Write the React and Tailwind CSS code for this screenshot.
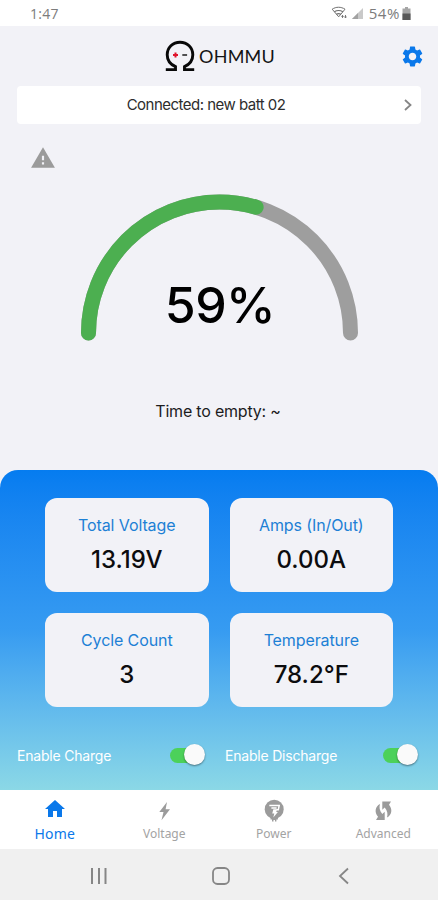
import React, { useState } from 'react';
import { MdSettings, MdWarning, MdHome } from 'react-icons/md';

const stats = [
  { label: 'Total Voltage', value: '13.19V' },
  { label: 'Amps (In/Out)', value: '0.00A' },
  { label: 'Cycle Count', value: '3' },
  { label: 'Temperature', value: '78.2°F' },
];

const StatusBar = () => (
  <div className="h-[26px] bg-white flex items-center justify-between pl-[30px] pr-[27px] font-['Open_Sans',sans-serif] text-[14px] text-[#7c7c7c]">
    <span className="tracking-[0.3px]">1:47</span>
    <div className="flex items-center">
      <svg width="17" height="14" viewBox="0 0 17 14" fill="none" stroke="#6f6f6f">
        <path d="M1.2 3.2C5 0.6 10 0.6 14 3.2L7.7 10.8Z" strokeWidth="1" />
        <path d="M3.3 5.7C6 4.2 9.3 4.2 11.9 5.7M5.4 8.2c1.4-.8 3-.8 4.4 0" strokeWidth="1.2" />
        <path d="M11.5 9v3M14.5 9v3M10.3 10.4h2.4M13.3 11h2.4" strokeWidth="0.9" />
      </svg>
      <svg className="ml-[4px]" width="12" height="12" viewBox="0 0 12 12">
        <path d="M0 12L11 1v11z" fill="#c9c9c9" />
        <path d="M0 12l6-6v6z" fill="#a2a2a2" />
      </svg>
      <span className="ml-[5px] text-[15px] tracking-[0.6px]">54%</span>
      <svg className="ml-[2px]" width="9" height="13" viewBox="0 0 9 13">
        <path d="M3 0h3v1.5h2.5V13H.5V1.5H3z" fill="#a5a5a5" />
        <path d="M.5 6.5h8V13h-8z" fill="#585858" />
      </svg>
    </div>
  </div>
);

const Logo = () => (
  <div className="flex items-center pl-[2px]">
    <svg width="30" height="32" viewBox="0 0 30 32" fill="none">
      <path d="M0.8 29.6h9.7v-2.9C5.7 24.6 2.2 20.5 2.2 14.8C2.2 7.6 7.8 2.2 15 2.2s12.8 5.4 12.8 12.6c0 5.7-3.5 9.8-8.3 11.9v2.9h9.7" stroke="#080808" strokeWidth="2.9" />
      <path d="M10.5 12.5v5M8 15h5" stroke="#e0142c" strokeWidth="2" />
      <path d="M17.3 15h4.8" stroke="#333" strokeWidth="1.7" />
    </svg>
    <span className="ml-[4px] font-[Lato,sans-serif] text-[18px] leading-none tracking-[0.2px] text-[#141414]">OHMMU</span>
  </div>
);

const Gauge = ({ percent }) => {
  const length = Math.PI * 131;
  const arc = 'M8.5 141a131 131 0 0 1 262 0';
  return (
    <div className="relative w-[279px] h-[149px]">
      <svg width="279" height="149" viewBox="0 0 279 149" fill="none" strokeWidth="15" strokeLinecap="round">
        <path d={arc} stroke="#9e9e9e" />
        <path d={arc} stroke="#4caf50" strokeDasharray={`${(length * percent) / 100} ${length * 2}`} />
      </svg>
      <div className="absolute inset-x-0 top-[83px] pl-[2px] text-center text-[50px] leading-[60px] font-medium tracking-[-0.6px] text-black">
        {percent}%
      </div>
    </div>
  );
};

const Toggle = ({ on, onClick }) => (
  <button onClick={onClick} className="relative w-[35px] h-[22px] flex items-center">
    <span className={`w-[30px] h-[15px] rounded-full ${on ? 'bg-[#4cd15a]' : 'bg-gray-300'}`} />
    <span className={`absolute top-0 w-[21px] h-[21px] rounded-full bg-[#fafafa] shadow-[0_1px_2px_rgba(0,0,0,0.45)] ${on ? 'right-0' : 'left-0'}`} />
  </button>
);

const BoltIcon = () => (
  <svg width="24" height="24" viewBox="0 0 24 24" fill="#9b9b9b">
    <path d="M15 5L7.300 15H11.500L9.500 23.300L18 12.200H13.600z" />
  </svg>
);

const PowerIcon = () => (
  <svg className="overflow-visible" width="24" height="24" viewBox="0 0 24 24">
    <circle cx="12.200" cy="12.300" r="9.500" fill="#9b9b9b" />
    <path d="M8.500 20h7.400v2.400h-1.500v2H13v-1.400h-1.500v1.400H10v-2H8.500z" fill="#9b9b9b" />
    <path d="M7.300 8.500h9.900l-.9 4.300h-1.800M9.400 11h5.200" fill="none" stroke="#fff" strokeWidth="1.500" />
    <path d="M11.400 12.200h3.800l-1 2.800h1.700l-4.600 5.400 1-3.900H10.200z" fill="#fff" />
  </svg>
);

const AdvancedIcon = () => (
  <svg width="24" height="24" viewBox="0 0 24 24" fill="#9b9b9b">
    <path d="M9 7C4 9.500 3.300 15.500 7 19.800L5 23H13.700V14.800L11.300 17C8.500 14 8 10 9 7z" />
    <path d="M16 20.600C21 18.100 21.700 12.100 18 7.800L20 4.600H11.300V12.800L13.700 10.600C16.500 13.600 17 17.600 16 20.600z" />
  </svg>
);

const tabs = [
  { name: 'Home', icon: <MdHome size={24} /> },
  { name: 'Voltage', icon: <BoltIcon /> },
  { name: 'Power', icon: <PowerIcon /> },
  { name: 'Advanced', icon: <AdvancedIcon /> },
];

const App = () => {
  const [charge, setCharge] = useState(true);
  const [discharge, setDischarge] = useState(true);
  const [active, setActive] = useState('Home');

  return (
    <div className="w-[438px] h-[900px] flex flex-col overflow-hidden bg-[#f2f2f7] font-[Inter,sans-serif]">
      <StatusBar />

      <header className="h-[60px] grid grid-cols-[1fr_auto_1fr] items-center pr-[13px] pl-[13px]">
        <span />
        <Logo />
        <MdSettings className="justify-self-end text-[#0a78ea]" size={25} />
      </header>

      <button className="mx-[17px] h-[38px] shrink-0 rounded-[4px] bg-white flex items-center pr-[8px] text-[#2d2d2d]">
        <span className="flex-1 pr-[8px] text-center text-[15px] tracking-[-0.52px]">Connected: new batt 02</span>
        <svg width="10" height="14" viewBox="0 0 10 14" fill="none" stroke="#858585" strokeWidth="1.8">
          <path d="M2 2l5.500 5L2 12" />
        </svg>
      </button>

      <div className="pl-[30px] pt-[21px] h-[68px]">
        <MdWarning className="text-[#9b9b9b]" size={26} />
      </div>

      <div className="flex flex-col items-center">
        <Gauge percent={59} />
        <p className="mt-[60px] pr-[2px] text-[16px] leading-[20px] tracking-[-0.2px] text-[#1c1c1e]">Time to empty: ~</p>
      </div>

      <section className="mt-auto h-[320px] shrink-0 rounded-t-[18px] bg-linear-to-b from-[#057cf0] via-[#369bf1] to-[#8bd8e6] flex flex-col">
        <div className="pt-[28px] px-[45px] grid grid-cols-2 gap-x-[21px] gap-y-[21px]">
          {stats.map(s => (
            <div key={s.label} className="h-[94px] rounded-[12px] bg-[#f2f2f7] flex flex-col items-center pt-[16px]">
              <span className="text-[16px] leading-[22px] tracking-[-0.1px] text-[#1d80d5]">{s.label}</span>
              <span className="mt-[9px] text-[24px] leading-[30px] font-medium text-[#0c0c0e]">{s.value}</span>
            </div>
          ))}
        </div>
        <div className="mt-[37px] pl-[17px] pr-[20px] flex items-center text-white text-[14px] tracking-[-0.2px]">
          <span className="w-[153px]">Enable Charge</span>
          <Toggle on={charge} onClick={() => setCharge(!charge)} />
          <span className="ml-[20px] w-[158px]">Enable Discharge</span>
          <Toggle on={discharge} onClick={() => setDischarge(!discharge)} />
        </div>
      </section>

      <nav className="h-[59px] shrink-0 bg-white grid grid-cols-4 font-['Noto_Sans',sans-serif]">
        {tabs.map(tab => (
          <button
            key={tab.name}
            onClick={() => setActive(tab.name)}
            className={`flex flex-col items-center pt-[7px] ${active === tab.name ? 'text-[#0a78ea] text-[14px] tracking-[0.2px]' : 'text-[#a3a3a3] text-[12px]'}`}
          >
            {tab.icon}
            <span className="leading-[20px] mt-[3px]">{tab.name}</span>
          </button>
        ))}
      </nav>

      <div className="h-[51px] shrink-0 bg-[#f0f0f0] flex items-center pl-[90px] pt-[3px]">
        <svg width="18" height="18" viewBox="0 0 18 18" stroke="#868686" strokeWidth="2">
          <path d="M2 1v16M9 1v16M15.500 1v16" />
        </svg>
        <svg className="ml-[104px]" width="18" height="18" viewBox="0 0 18 18" fill="none" stroke="#868686" strokeWidth="1.8">
          <rect x="1" y="1" width="16" height="16" rx="4.500" />
        </svg>
        <svg className="ml-[108px]" width="12" height="18" viewBox="0 0 12 18" fill="none" stroke="#868686" strokeWidth="1.8">
          <path d="M10 1.500L2 9l8 7.500" />
        </svg>
      </div>
    </div>
  );
};

export default App;
